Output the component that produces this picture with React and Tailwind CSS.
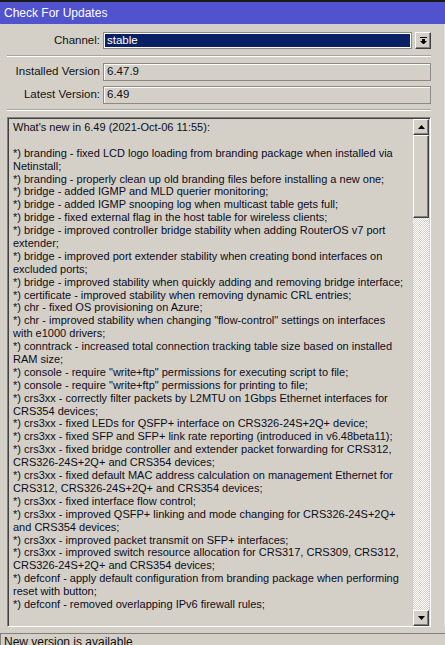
import React from "react";

const LINES = [
  "What's new in 6.49 (2021-Oct-06 11:55):",
  "",
  "*) branding - fixed LCD logo loading from branding package when installed via",
  "Netinstall;",
  "*) branding - properly clean up old branding files before installing a new one;",
  "*) bridge - added IGMP and MLD querier monitoring;",
  "*) bridge - added IGMP snooping log when multicast table gets full;",
  "*) bridge - fixed external flag in the host table for wireless clients;",
  "*) bridge - improved controller bridge stability when adding RouterOS v7 port",
  "extender;",
  "*) bridge - improved port extender stability when creating bond interfaces on",
  "excluded ports;",
  "*) bridge - improved stability when quickly adding and removing bridge interface;",
  "*) certificate - improved stability when removing dynamic CRL entries;",
  "*) chr - fixed OS provisioning on Azure;",
  "*) chr - improved stability when changing \"flow-control\" settings on interfaces",
  "with e1000 drivers;",
  "*) conntrack - increased total connection tracking table size based on installed",
  "RAM size;",
  "*) console - require \"write+ftp\" permissions for executing script to file;",
  "*) console - require \"write+ftp\" permissions for printing to file;",
  "*) crs3xx - correctly filter packets by L2MTU on 1Gbps Ethernet interfaces for",
  "CRS354 devices;",
  "*) crs3xx - fixed LEDs for QSFP+ interface on CRS326-24S+2Q+ device;",
  "*) crs3xx - fixed SFP and SFP+ link rate reporting (introduced in v6.48beta11);",
  "*) crs3xx - fixed bridge controller and extender packet forwarding for CRS312,",
  "CRS326-24S+2Q+ and CRS354 devices;",
  "*) crs3xx - fixed default MAC address calculation on management Ethernet for",
  "CRS312, CRS326-24S+2Q+ and CRS354 devices;",
  "*) crs3xx - fixed interface flow control;",
  "*) crs3xx - improved QSFP+ linking and mode changing for CRS326-24S+2Q+",
  "and CRS354 devices;",
  "*) crs3xx - improved packet transmit on SFP+ interfaces;",
  "*) crs3xx - improved switch resource allocation for CRS317, CRS309, CRS312,",
  "CRS326-24S+2Q+ and CRS354 devices;",
  "*) defconf - apply default configuration from branding package when performing",
  "reset with button;",
  "*) defconf - removed overlapping IPv6 firewall rules;",
];

function Arrow({ up }) {
  return (
    <svg width="7" height="4" viewBox="0 0 7 4">
      {up ? <path d="M3.5 0 L7 4 L0 4 Z" fill="#000" /> : <path d="M0 0 L7 0 L3.5 4 Z" fill="#000" />}
    </svg>
  );
}

function BevelButton({ children, className = "" }) {
  return (
    <div className={"flex items-center justify-center bg-[#d4d0c8] border-t border-l border-white border-b border-r border-b-[#404040] border-r-[#404040] shadow-[inset_-1px_-1px_0_#808080] " + className}>
      {children}
    </div>
  );
}

function Field({ label, value }) {
  return (
    <div className="flex items-center h-[18px]">
      <div className="w-[93px] text-right whitespace-nowrap">{label}</div>
      <div className="ml-[3px] flex-1 h-full flex items-center border border-[#8c8a86] shadow-[inset_1px_1px_0_#fff] px-[3px]">
        {value}
      </div>
    </div>
  );
}

function Separator() {
  return <div className="h-[2px] border-t border-[#a8a59f] border-b border-b-white" />;
}

export default function App() {
  return (
    <div
      className="w-[445px] h-[645px] overflow-hidden bg-[#d4d0c8] flex flex-col text-[11.5px] text-[#111]"
      style={{ fontFamily: '"Liberation Sans", Arial, sans-serif' }}
    >
      <div className="h-[24px] shrink-0 border-t-2 border-[#1a1a1a] bg-[#5052ce] text-white text-[12px] px-[4px] flex items-center">
        Check For Updates
      </div>

      <div className="flex-1 min-h-0 flex flex-col pl-[7px] pr-[13px] border-r border-r-[#e4e1da]">
        <div className="mt-[8px] flex items-center h-[17px]">
          <div className="w-[93px] text-right">Channel:</div>
          <div className="ml-[3px] flex-1 h-full flex items-center bg-[#0a2064] text-white border border-[#8c8a86] shadow-[inset_0_0_0_1px_#fff] px-[3px]">
            stable
          </div>
          <BevelButton className="ml-[3px] w-[16px] h-full">
            <svg width="7" height="7" viewBox="0 0 7 7">
              <rect x="0" y="0" width="7" height="1" fill="#000" />
              <rect x="2" y="2" width="3" height="2" fill="#000" />
              <path d="M0 4 L7 4 L3.5 7.5 Z" fill="#000" />
            </svg>
          </BevelButton>
        </div>

        <div className="mt-[6px]">
          <Separator />
        </div>

        <div className="mt-[6px]">
          <Field label="Installed Version" value="6.47.9" />
        </div>
        <div className="mt-[5px]">
          <Field label="Latest Version:" value="6.49" />
        </div>

        <div className="mt-[5px]">
          <Separator />
        </div>

        <div className="mt-[6px] h-[512px] flex border-t border-l border-[#808080] border-b border-r border-b-white border-r-white">
          <div className="flex-1 flex border-t border-l border-[#404040] min-w-0">
            <div className="flex-1 min-w-0 overflow-hidden pl-[4px] pt-[2px] text-[11px] leading-[12.9px] text-[#0c0c1a]">
              {LINES.map((l, i) => (
                <div key={i} className="whitespace-nowrap h-[12.9px]">
                  {l}
                </div>
              ))}
            </div>
            <div className="w-[16px] mr-[1px] flex flex-col">
              <BevelButton className="h-[16px] shrink-0">
                <Arrow up />
              </BevelButton>
              <BevelButton className="h-[83px] shrink-0" />
              <div className="flex-1 bg-[repeating-conic-gradient(#ffffff_0%_25%,#d4d0c8_0%_50%)] bg-[length:2px_2px]" />
              <BevelButton className="h-[16px] shrink-0">
                <Arrow />
              </BevelButton>
            </div>
          </div>
        </div>
      </div>

      <div className="h-[12px] shrink-0 mt-[6px] border-t border-l border-[#808080] px-[3px] pt-[1px] text-[12px] leading-[14px] whitespace-nowrap">
        New version is available
      </div>
    </div>
  );
}
